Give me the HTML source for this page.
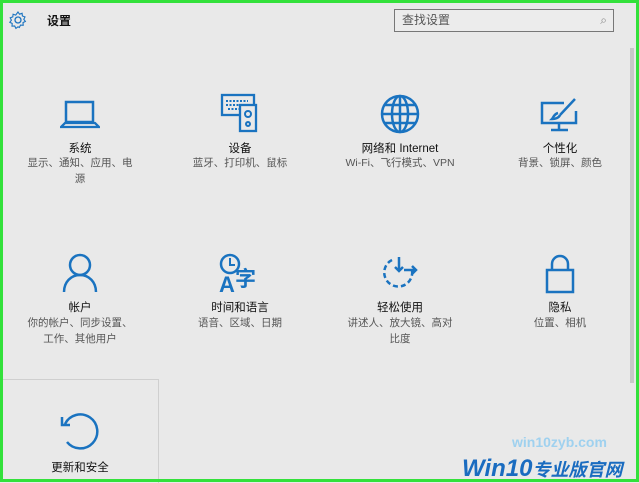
<!DOCTYPE html>
<html><head><meta charset="utf-8"><style>
body{margin:0;width:639px;height:482px;overflow:hidden;background:#e9e9e9;font-family:"Liberation Sans","Noto Sans CJK SC",sans-serif;position:relative}
.frame{position:absolute;left:0;top:0;width:633px;height:476px;border:3px solid #33e13b;}
.t{position:absolute;text-align:center;width:150px;font-size:11.5px;color:#111}
.s{position:absolute;text-align:center;width:106px;font-size:10.5px;color:#555;line-height:16px}
svg{position:absolute}
</style></head><body>
<svg style="left:8px;top:10px" width="20" height="20" viewBox="0 0 20 20"><circle cx="10" cy="10" r="3" fill="none" stroke="#1a73c0" stroke-width="1.3"/><path d="M10 2l1.5 2.2 2.6-.9.3 2.7 2.6.9-1.2 2.4 1.6 2.1-2.4 1.2.2 2.7-2.7-.2-1.2 2.4L10 16.8l-2.1 1.6-1.2-2.4-2.7.2.2-2.7L1.8 12.3l1.6-2.1L2.2 7.8l2.6-.9.3-2.7 2.6.9z" fill="none" stroke="#1a73c0" stroke-width="1.1"/></svg>
<div style="position:absolute;left:47px;top:12px;font-size:12px;font-weight:bold;color:#111">设置</div>
<div style="position:absolute;left:394px;top:9px;width:218px;height:21px;border:1px solid #777;background:#ececec;font-size:12px;color:#555;line-height:21px;text-indent:7px">查找设置<span style="position:absolute;right:6px;color:#888">⌕</span></div>
<div style="position:absolute;left:630px;top:48px;width:4px;height:335px;background:#c8c8c8"></div>
<svg style="left:60px;top:100px" width="40" height="30" viewBox="0 0 40 30"><rect x="6" y="2" width="27" height="20" fill="none" stroke="#1a73c0" stroke-width="2.5"/><path d="M1 27h38l-4-4H5z" fill="none" stroke="#1a73c0" stroke-width="2.3"/></svg>
<svg style="left:220px;top:93px" width="40" height="40" viewBox="0 0 40 40"><rect x="2" y="2" width="32" height="20" fill="none" stroke="#1a73c0" stroke-width="2.3"/><path d="M6 8h22M6 12h22M8 16h18" stroke="#1a73c0" stroke-width="2" stroke-dasharray="2 1.5"/><rect x="20" y="12" width="16" height="26" fill="#e9e9e9" stroke="#1a73c0" stroke-width="2.3"/><circle cx="28" cy="21" r="3" fill="none" stroke="#1a73c0" stroke-width="2"/><circle cx="28" cy="31" r="2" fill="none" stroke="#1a73c0" stroke-width="2"/></svg>
<svg style="left:380px;top:94px" width="40" height="40" viewBox="0 0 40 40"><g fill="none" stroke="#1a73c0" stroke-width="2.5"><circle cx="20" cy="20" r="18"/><ellipse cx="20" cy="20" rx="8" ry="18"/><path d="M2 20h36M5 11h30M5 29h30M20 2v36"/></g></svg>
<svg style="left:540px;top:97px" width="40" height="36" viewBox="0 0 40 36"><g fill="none" stroke="#1a73c0" stroke-width="2.5"><path d="M24 6H2v20h34V14"/><path d="M19 26v6M11 33h17"/><path d="M35 2L20 18M18 16c-4 1-5 5-6 6 3 0 7-1 8-4"/></g></svg>
<div class="t" style="left:5px;top:140px">系统</div><div class="s" style="left:27px;top:155px">显示、通知、应用、电源</div>
<div class="t" style="left:165px;top:140px">设备</div><div class="s" style="left:177px;top:155px;width:126px">蓝牙、打印机、鼠标</div>
<div class="t" style="left:325px;top:140px">网络和 Internet</div><div class="s" style="left:310px;top:155px;width:180px">Wi-Fi、飞行模式、VPN</div>
<div class="t" style="left:485px;top:140px">个性化</div><div class="s" style="left:497px;top:155px;width:126px">背景、锁屏、颜色</div>
<svg style="left:62px;top:253px" width="36" height="40" viewBox="0 0 36 40"><g fill="none" stroke="#1a73c0" stroke-width="2.5"><circle cx="18" cy="12" r="10"/><path d="M2 39c0-10 7-17 16-17s16 7 16 17"/></g></svg>
<svg style="left:218px;top:253px" width="46" height="40" viewBox="0 0 46 40"><circle cx="12" cy="11" r="9" fill="none" stroke="#1a73c0" stroke-width="2.5"/><path d="M12 5v7h5" fill="none" stroke="#1a73c0" stroke-width="2"/><text x="1" y="39" font-size="22" font-weight="bold" fill="#1a73c0" font-family="Liberation Sans">A</text><text x="17" y="33" font-size="21" font-weight="bold" fill="#1a73c0" font-family="Noto Sans CJK SC">字</text></svg>
<svg style="left:380px;top:256px" width="40" height="36" viewBox="0 0 40 36"><g fill="none" stroke="#1a73c0" stroke-width="2.5"><path d="M12 4A14 14 0 1 0 32 14" stroke-dasharray="5 3"/><path d="M19 1v14M15 11l4 4 4-4M24 14h12M32 10l4 4-4 4"/></g></svg>
<svg style="left:545px;top:254px" width="30" height="40" viewBox="0 0 30 40"><g fill="none" stroke="#1a73c0" stroke-width="2.5"><path d="M7 16V10a8 8 0 0 1 16 0v6"/><rect x="2" y="16" width="26" height="22"/></g></svg>
<div class="t" style="left:5px;top:299px">帐户</div><div class="s" style="left:27px;top:315px">你的帐户、同步设置、工作、其他用户</div>
<div class="t" style="left:165px;top:299px">时间和语言</div><div class="s" style="left:177px;top:315px;width:126px">语音、区域、日期</div>
<div class="t" style="left:325px;top:299px">轻松使用</div><div class="s" style="left:347px;top:315px">讲述人、放大镜、高对比度</div>
<div class="t" style="left:485px;top:299px">隐私</div><div class="s" style="left:497px;top:315px;width:126px">位置、相机</div>
<div style="position:absolute;left:3px;top:379px;width:155px;height:103px;border-top:1px solid #cfcfcf;border-right:1px solid #cfcfcf"></div>
<svg style="left:59px;top:412px" width="42" height="42" viewBox="0 0 42 42"><g fill="none" stroke="#1a73c0" stroke-width="2.5"><path d="M6 12A17 17 0 1 1 8 30"/><path d="M3 5v8h8"/></g></svg>
<div class="t" style="left:5px;top:459px">更新和安全</div>
<div style="position:absolute;left:462px;top:455px;font:italic bold 24px 'Liberation Sans',sans-serif;color:#1a6cc0;white-space:nowrap">Win10<span style="font-size:18px;font-family:'Noto Sans CJK SC'">专业版官网</span></div>
<div style="position:absolute;left:512px;top:434px;font-size:14px;color:#9fd1ef;font-weight:bold">win10zyb.com</div>
<div class="frame"></div>
</body></html>
